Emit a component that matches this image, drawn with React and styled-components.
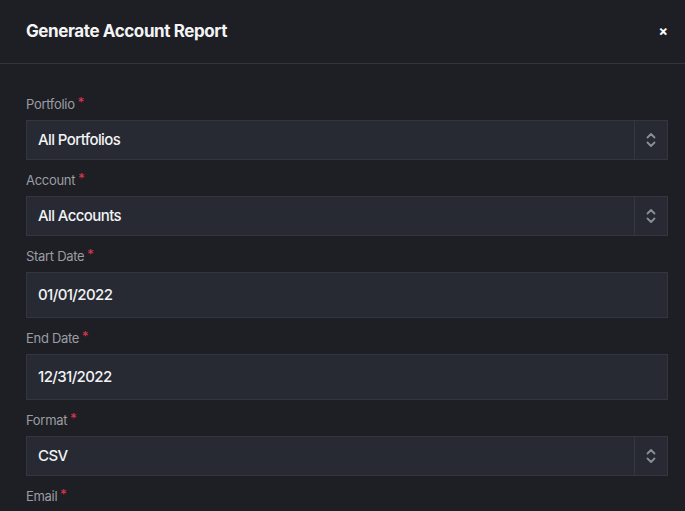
import React from "react";
import styled, { createGlobalStyle } from "styled-components";

const Global = createGlobalStyle`
  html, body { margin: 0; padding: 0; background: #1e1f25; }
  body { font-family: Inter, "Noto Sans", sans-serif; color: #fff; }
  * { box-sizing: border-box; }
`;

const Dialog = styled.div`
  width: 685px;
  height: 511px;
  overflow: hidden;
  background: #1e1f25;
`;

const Header = styled.div`
  height: 64px;
  display: flex;
  align-items: center;
  justify-content: space-between;
  padding: 0 17px 2px 26px;
  border-bottom: 1px solid #34363d;
`;

const Title = styled.h2`
  margin: 0;
  font-size: 17px;
  font-weight: 700;
  letter-spacing: -0.4px;
  color: #f4f4f6;
`;

const Close = styled.button`
  background: none;
  border: none;
  color: #fff;
  font-family: Inter, sans-serif;
  font-size: 14px;
  font-weight: 700;
  padding: 0;
  cursor: pointer;
`;

const Form = styled.div`
  padding: 32px 17px 0 26px;
  display: flex;
  flex-direction: column;
  gap: 12px;
`;

const Field = styled.div`
  display: flex;
  flex-direction: column;
  gap: 8px;
`;

const Label = styled.label`
  font-size: 13px;
  line-height: 16px;
  color: #9b9da4;
  letter-spacing: -0.3px;
`;

const Req = styled.span`
  color: #e2364f;
  margin-left: 3px;
  font-size: 13px;
  position: relative;
  top: -2px;
`;

const Box = styled.div`
  height: ${p => (p.$tall ? 46 : 40)}px;
  background: #272a33;
  border: 1px solid #33363f;
  display: flex;
  align-items: center;
`;

const Value = styled.div`
  flex: 1;
  padding-left: 11px;
  padding-bottom: 2px;
  font-size: 15px;
  font-weight: 500;
  color: #f2f3f5;
  letter-spacing: -0.6px;
`;

const Arrow = styled.div`
  width: 33px;
  height: 100%;
  border-left: 1px solid #353842;
  display: flex;
  align-items: center;
  justify-content: center;
  color: #8b8e97;
`;

const Chevrons = () => (
  <svg width="10" height="16" viewBox="0 0 10 16" fill="none" stroke="currentColor" strokeWidth="1.8" strokeLinecap="round" strokeLinejoin="round">
    <path d="M1.5 5.5 L5 2 L8.5 5.5" />
    <path d="M1.5 10.5 L5 14 L8.5 10.5" />
  </svg>
);

const SelectField = ({ label, value }) => (
  <Field>
    <Label>{label}<Req>*</Req></Label>
    <Box>
      <Value>{value}</Value>
      <Arrow><Chevrons /></Arrow>
    </Box>
  </Field>
);

const DateField = ({ label, value }) => (
  <Field>
    <Label>{label}<Req>*</Req></Label>
    <Box $tall>
      <Value>{value}</Value>
    </Box>
  </Field>
);

export default function App() {
  return (
    <>
      <Global />
      <Dialog>
        <Header>
          <Title>Generate Account Report</Title>
          <Close>×</Close>
        </Header>
        <Form>
          <SelectField label="Portfolio" value="All Portfolios" />
          <SelectField label="Account" value="All Accounts" />
          <DateField label="Start Date" value="01/01/2022" />
          <DateField label="End Date" value="12/31/2022" />
          <SelectField label="Format" value="CSV" />
          <Field>
            <Label>Email<Req>*</Req></Label>
          </Field>
        </Form>
      </Dialog>
    </>
  );
}
